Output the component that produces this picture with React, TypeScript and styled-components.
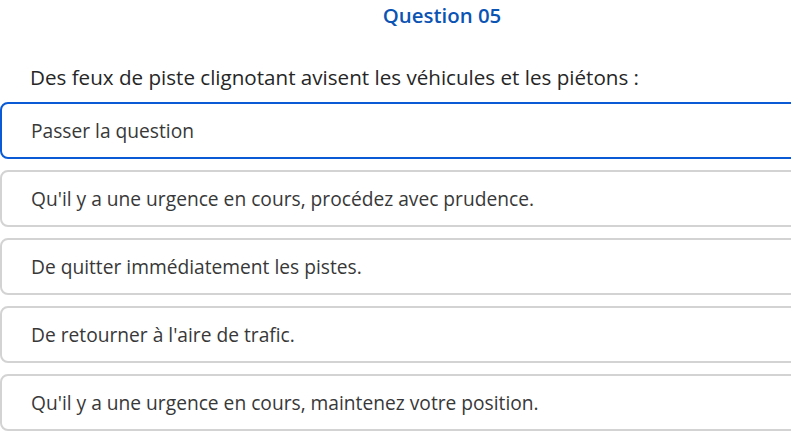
import React from "react";
import styled, { createGlobalStyle } from "styled-components";

const GlobalStyle = createGlobalStyle`
  body {
    margin: 0;
    background: #fff;
    overflow: hidden;
    font-family: "Open Sans", "Noto Sans", sans-serif;
  }
`;

const Page = styled.div`
  width: 884px;
  display: flex;
  flex-direction: column;
`;

const Title = styled.h2`
  margin: 0;
  padding-top: 2px;
  text-align: center;
  font-size: 20.4px;
  font-weight: 600;
  line-height: 26px;
  color: #0b54b4;
`;

const Prompt = styled.p`
  margin: 0;
  padding: 35px 0 0 30px;
  font-size: 20.6px;
  line-height: 28px;
  color: #262626;
`;

const Options = styled.div`
  display: flex;
  flex-direction: column;
  gap: 11px;
  margin-top: 11px;
`;

const Option = styled.div<{ $active?: boolean }>`
  height: 57px;
  box-sizing: border-box;
  display: flex;
  align-items: center;
  padding-left: 29px;
  border: 2px solid ${(p) => (p.$active ? "#0a5ad6" : "#d3d3d3")};
  border-radius: 8px;
  font-size: 19.2px;
  color: #383838;
`;

const answers = [
  "Passer la question",
  "Qu'il y a une urgence en cours, procédez avec prudence.",
  "De quitter immédiatement les pistes.",
  "De retourner à l'aire de trafic.",
  "Qu'il y a une urgence en cours, maintenez votre position.",
];

export default function App() {
  return (
    <Page>
      <GlobalStyle />
      <Title>Question 05</Title>
      <Prompt>Des feux de piste clignotant avisent les véhicules et les piétons :</Prompt>
      <Options>
        {answers.map((a, i) => (
          <Option key={a} $active={i === 0}>
            {a}
          </Option>
        ))}
      </Options>
    </Page>
  );
}
